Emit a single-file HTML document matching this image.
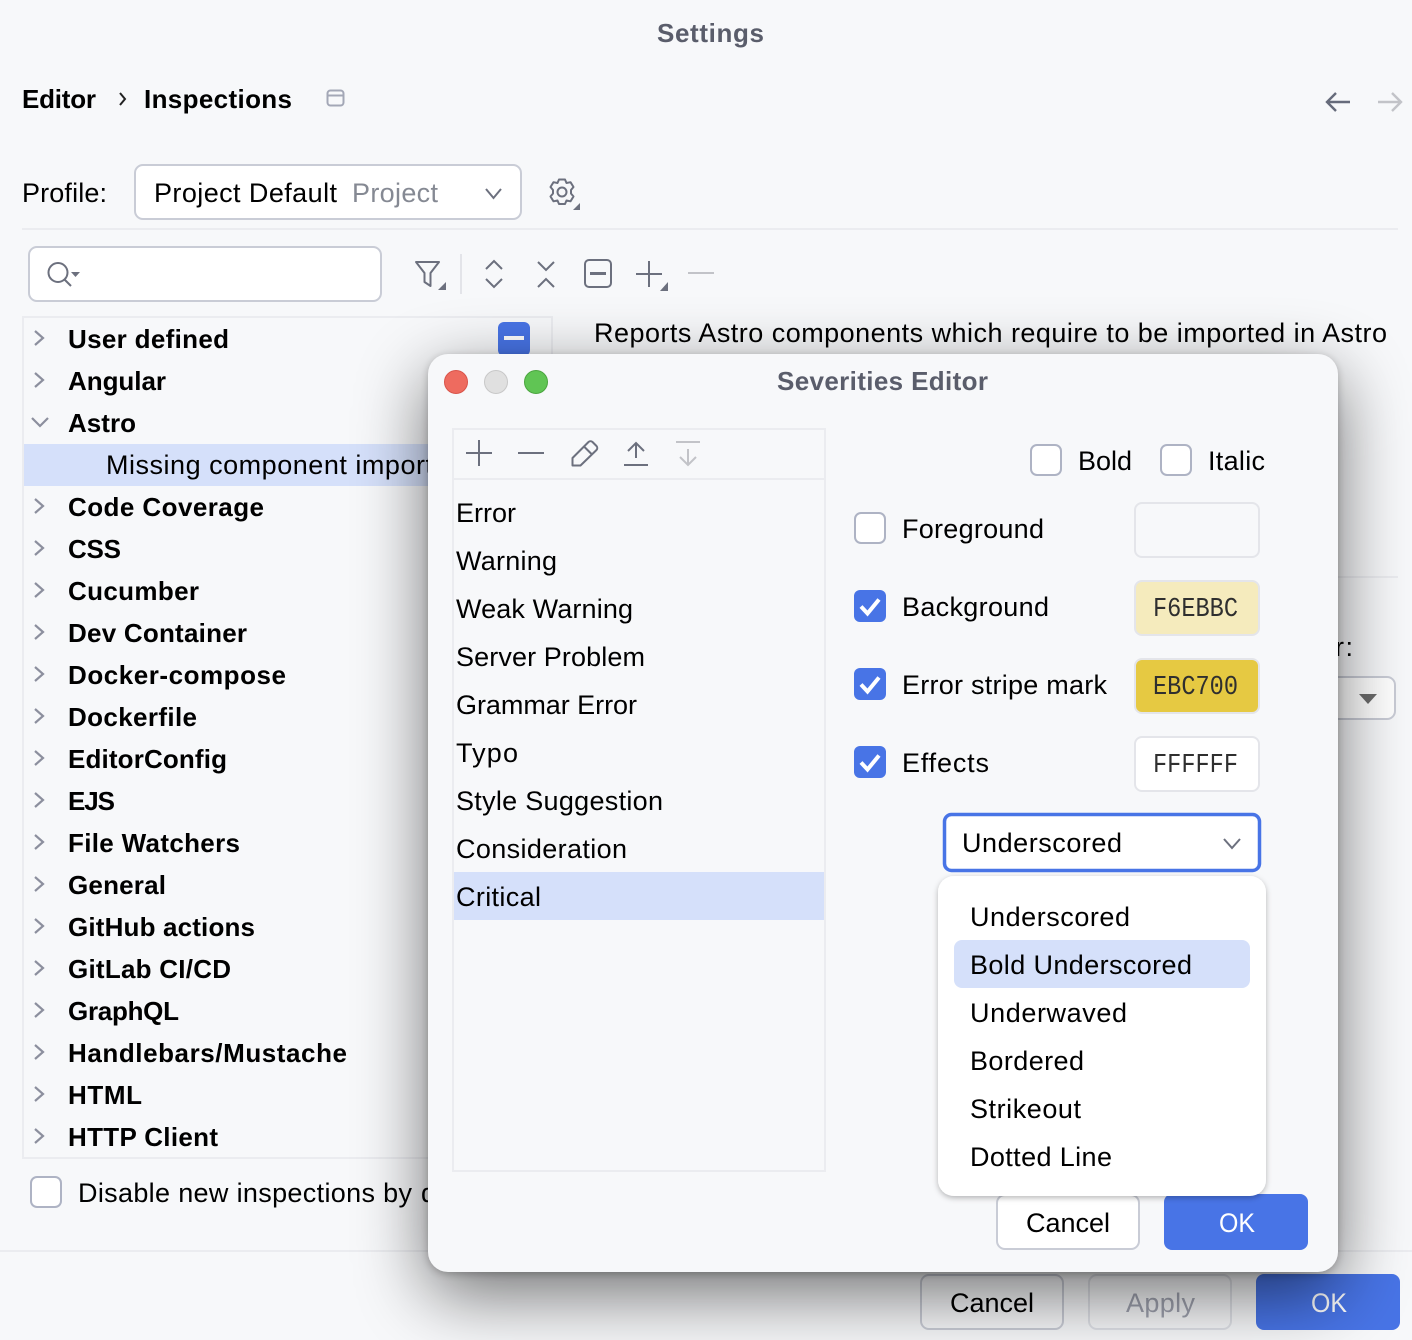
<!DOCTYPE html>
<html><head><meta charset="utf-8"><style>
html,body{margin:0;padding:0;background:#f7f8fa;width:1412px;height:1340px;overflow:hidden}
svg{display:block}
text{font-family:"Liberation Sans",sans-serif;font-size:27px;fill:#000}
text.b{font-weight:bold;font-size:26px}
text.m{font-family:"Liberation Mono",monospace;font-size:27px;fill:#2f2f2f}
.i{fill:none;stroke:#6c707e;stroke-width:2}
.d{fill:none;stroke:#c2c3c8;stroke-width:2}
.c{fill:none;stroke:#8c8f9e;stroke-width:2.2}
.cb{fill:#fff;stroke:#aeb3c4;stroke-width:2}
.ck{fill:#4874e6}
.t{fill:none;stroke:#fff;stroke-width:4}
</style></head><body>
<svg width="1412" height="1340" viewBox="0 0 1412 1340" xmlns="http://www.w3.org/2000/svg">
<defs>
<filter id="s" x="-30%" y="-30%" width="160%" height="160%"><feGaussianBlur stdDeviation="36"/></filter>
<filter id="s2" x="-30%" y="-30%" width="160%" height="160%"><feGaussianBlur stdDeviation="4"/></filter>
<filter id="p" x="-10%" y="-10%" width="120%" height="120%"><feDropShadow dx="0" dy="2" stdDeviation="3" flood-color="#000" flood-opacity=".28"/></filter>
</defs>
<rect width="1412" height="1340" fill="#f7f8fa"/>

<!-- background window -->
<text x="657" y="42" class="b" textLength="107" style="fill:#5a5d6b">Settings</text>
<text x="22" y="108" class="b" textLength="74">Editor</text>
<path d="M120 93l5 6-5 6" fill="none" stroke="#222" stroke-width="2"/>
<text x="144" y="108" class="b" textLength="148">Inspections</text>
<rect x="327.500" y="90.500" width="16" height="15" rx="3" fill="none" stroke="#a3a7b6" stroke-width="2"/><path d="M328 95.500h15" stroke="#a3a7b6" stroke-width="2"/>
<path d="M1350 102h-23M1336 93l-9 9 9 9" fill="none" stroke="#666b7b" stroke-width="2.400"/>
<path d="M1378 102h23M1392 93l9 9-9 9" fill="none" stroke="#c2c3c8" stroke-width="2.400"/>

<text x="22" y="202" textLength="85">Profile:</text>
<rect x="135" y="165" width="386" height="54" rx="8" fill="#fff" stroke="#c9ccd6" stroke-width="2"/>
<text x="154" y="202" textLength="183">Project Default</text>
<text x="352" y="202" textLength="86" style="fill:#858993">Project</text>
<path d="M486 189l7.500 9 7.500-9" class="i"/>
<!-- gear -->
<path d="M559 179.500h6l1.500 3.500 4-.8 3 4.800-2.500 3 .0 3.500 2.500 3-3 4.800-4-.8-1.500 3.500h-6l-1.500-3.500-4 .8-3-4.800 2.500-3v-3.500l-2.500-3 3-4.800 4 .8z" class="i" stroke-linejoin="round"/>
<circle cx="562" cy="192" r="4.500" class="i"/>
<path d="M580 203v7h-7z" fill="#6c707e"/>
<rect x="22" y="228" width="1376" height="2" fill="#ebecf0"/>

<rect x="29" y="247" width="352" height="54" rx="8" fill="#fff" stroke="#c9ccd6" stroke-width="2"/>
<circle cx="58" cy="272.500" r="9.500" class="i"/><path d="M64.500 279.500L71 286" class="i"/><path d="M71 272h9l-4.500 5z" fill="#6c707e"/>
<path d="M416 262h23l-8.500 11v13l-6-4v-9z" class="i" stroke-linejoin="round"/><path d="M446 282v8h-8z" fill="#6c707e"/>
<rect x="460" y="254" width="2" height="40" fill="#e3e4e9"/>
<path d="M486 269l8-8 8 8M486 279l8 8 8-8" class="i"/>
<path d="M538 262l8 8 8-8M538 287l8-8 8 8" class="i"/>
<rect x="585" y="260" width="26" height="27" rx="4" class="i"/><path d="M590 273.500h16" class="i" style="stroke-width:3"/>
<path d="M649 261v26M636 274h26" class="i"/><path d="M668 282v9h-8z" fill="#6c707e"/>
<path d="M688 273h26" class="d"/>

<!-- tree -->
<rect x="23" y="317" width="529" height="841" fill="none" stroke="#ebecf0" stroke-width="2"/>
<rect x="24" y="444" width="430" height="42" fill="#d5e0fa"/>
<rect x="498" y="322" width="32" height="34" rx="6" class="ck"/><rect x="504" y="336" width="20" height="4" fill="#fff"/>
<text class="b" x="68" y="348" textLength="161">User defined</text>
<text class="b" x="68" y="390" textLength="98">Angular</text>
<text class="b" x="68" y="432" textLength="68">Astro</text>
<text class="b" x="68" y="516" textLength="196">Code Coverage</text>
<text class="b" x="68" y="558" textLength="53">CSS</text>
<text class="b" x="68" y="600" textLength="131">Cucumber</text>
<text class="b" x="68" y="642" textLength="179">Dev Container</text>
<text class="b" x="68" y="684" textLength="218">Docker-compose</text>
<text class="b" x="68" y="726" textLength="129">Dockerfile</text>
<text class="b" x="68" y="768" textLength="159">EditorConfig</text>
<text class="b" x="68" y="810" textLength="47">EJS</text>
<text class="b" x="68" y="852" textLength="172">File Watchers</text>
<text class="b" x="68" y="894" textLength="98">General</text>
<text class="b" x="68" y="936" textLength="187">GitHub actions</text>
<text class="b" x="68" y="978" textLength="163">GitLab CI/CD</text>
<text class="b" x="68" y="1020" textLength="111">GraphQL</text>
<text class="b" x="68" y="1062" textLength="279">Handlebars/Mustache</text>
<text class="b" x="68" y="1104" textLength="74">HTML</text>
<text class="b" x="68" y="1146" textLength="150">HTTP Client</text>
<text x="106" y="474" textLength="341">Missing component imports</text>
<g class="c">
<path d="M35 331l8 7-8 7M35 373l8 7-8 7M32 418l8 8 8-8M35 499l8 7-8 7M35 541l8 7-8 7M35 583l8 7-8 7M35 625l8 7-8 7M35 667l8 7-8 7M35 709l8 7-8 7M35 751l8 7-8 7M35 793l8 7-8 7M35 835l8 7-8 7M35 877l8 7-8 7M35 919l8 7-8 7M35 961l8 7-8 7M35 1003l8 7-8 7M35 1045l8 7-8 7M35 1087l8 7-8 7M35 1129l8 7-8 7"/>
</g>
<rect x="31" y="1177" width="30" height="30" rx="6" class="cb"/>
<text x="78" y="1202" textLength="334">Disable new inspections by</text>
<text x="421" y="1202" textLength="90">default</text>
<rect x="0" y="1250" width="1412" height="2" fill="#ebecf0"/>

<text x="594" y="342" textLength="793">Reports Astro components which require to be imported in Astro</text>
<rect x="1300" y="576" width="98" height="2" fill="#ebecf0"/>
<text x="1335" y="656" textLength="18">r:</text>
<rect x="1200" y="677" width="195" height="42" rx="8" fill="#fff" stroke="#c9ccd6" stroke-width="2"/>
<path d="M1359 694h18l-9 10z" fill="#6c6c6c"/>

<rect x="921" y="1275" width="142" height="54" rx="8" fill="#f7f8fa" stroke="#c9ccd6" stroke-width="2"/>
<text x="950" y="1312" textLength="84">Cancel</text>
<rect x="1089" y="1275" width="142" height="54" rx="8" fill="#f7f8fa" stroke="#dfe1e7" stroke-width="2"/>
<text x="1126" y="1312" textLength="69" style="fill:#a0a3b0">Apply</text>
<rect x="1256" y="1274" width="144" height="56" rx="8" fill="#4874e6"/>
<text x="1311" y="1312" textLength="36" lengthAdjust="spacingAndGlyphs" style="fill:#fff">OK</text>

<!-- shadow -->
<rect x="428" y="376" width="910" height="918" rx="20" fill="#000" opacity=".55" filter="url(#s)"/>
<rect x="428" y="356" width="910" height="918" rx="20" fill="#000" opacity=".22" filter="url(#s2)"/>

<!-- dialog -->
<rect x="428" y="354" width="910" height="918" rx="20" fill="#f7f8fa"/>
<circle cx="456" cy="382" r="11.500" fill="#ee6b5f" stroke="#d9544a"/>
<circle cx="496" cy="382" r="11.500" fill="#e0e0e0" stroke="#c8c8c8"/>
<circle cx="536" cy="382" r="11.500" fill="#60c554" stroke="#4ba53f"/>
<text x="777" y="390" class="b" textLength="211" style="fill:#5a5d6b">Severities Editor</text>

<rect x="453" y="429" width="372" height="742" fill="none" stroke="#ebecf0" stroke-width="2"/>
<rect x="453" y="478" width="372" height="2" fill="#ebecf0"/>
<path d="M479 440v26M466 453h26M518 453h26" class="i"/>
<path d="M572.500 465.500v-7.500l16-16a3 3 0 0 1 4 0l4 4a3 3 0 0 1 0 4l-16 15.500zM584 446.500l8 8" class="i" stroke-linejoin="round"/>
<path d="M624 465h24M636 458v-15M628 451l8-8 8 8" class="i"/>
<path d="M676 442h24M688 449v15M680 457l8 8 8-8" class="d"/>

<rect x="454" y="872" width="370" height="48" fill="#d5e0fa"/>
<text x="456" y="522" textLength="60">Error</text>
<text x="456" y="570" textLength="101">Warning</text>
<text x="456" y="618" textLength="177">Weak Warning</text>
<text x="456" y="666" textLength="189">Server Problem</text>
<text x="456" y="714" textLength="181">Grammar Error</text>
<text x="456" y="762" textLength="62">Typo</text>
<text x="456" y="810" textLength="207">Style Suggestion</text>
<text x="456" y="858" textLength="171">Consideration</text>
<text x="456" y="906" textLength="85">Critical</text>

<rect x="1031" y="445" width="30" height="30" rx="6" class="cb"/>
<text x="1078" y="470" textLength="54">Bold</text>
<rect x="1161" y="445" width="30" height="30" rx="6" class="cb"/>
<text x="1208" y="470" textLength="57">Italic</text>

<rect x="855" y="513" width="30" height="30" rx="6" class="cb"/>
<text x="902" y="538" textLength="142">Foreground</text>
<rect x="1135" y="503" width="124" height="54" rx="7" fill="#f7f8fa" stroke="#e4e5ea" stroke-width="2"/>

<rect x="854" y="590" width="32" height="32" rx="6" class="ck"/><path d="M861 606.500l6.500 7 11.500-14" class="t"/>
<text x="902" y="616" textLength="147">Background</text>
<rect x="1135" y="581" width="124" height="54" rx="7" fill="#f5ebbd" stroke="#e4e5ea" stroke-width="2"/>
<text x="1153" y="616" class="m" textLength="85" lengthAdjust="spacingAndGlyphs">F6EBBC</text>

<rect x="854" y="668" width="32" height="32" rx="6" class="ck"/><path d="M861 684.500l6.500 7 11.500-14" class="t"/>
<text x="902" y="694" textLength="205">Error stripe mark</text>
<rect x="1135" y="659" width="124" height="54" rx="7" fill="#e6c942" stroke="#e4e5ea" stroke-width="2"/>
<text x="1153" y="694" class="m" textLength="85" lengthAdjust="spacingAndGlyphs">EBC700</text>

<rect x="854" y="746" width="32" height="32" rx="6" class="ck"/><path d="M861 762.500l6.500 7 11.500-14" class="t"/>
<text x="902" y="772" textLength="87">Effects</text>
<rect x="1135" y="737" width="124" height="54" rx="7" fill="#fff" stroke="#e4e5ea" stroke-width="2"/>
<text x="1153" y="772" class="m" textLength="85" lengthAdjust="spacingAndGlyphs">FFFFFF</text>

<rect x="944.500" y="814.500" width="315" height="56" rx="7" fill="#fff" stroke="#4874e6" stroke-width="3.500"/>
<text x="962" y="852" textLength="160">Underscored</text>
<path d="M1224 839l8 9 8-9" class="i"/>

<rect x="997" y="1195" width="142" height="54" rx="8" fill="#fff" stroke="#c9ccd6" stroke-width="2"/>
<text x="1026" y="1232" textLength="84">Cancel</text>
<rect x="1164" y="1194" width="144" height="56" rx="8" fill="#4874e6"/>
<text x="1219" y="1232" textLength="36" lengthAdjust="spacingAndGlyphs" style="fill:#fff">OK</text>

<!-- popup -->
<rect x="938" y="876" width="328" height="320" rx="16" fill="#fff" filter="url(#p)"/>
<rect x="954" y="940" width="296" height="48" rx="8" fill="#d5e0fa"/>
<text x="970" y="926" textLength="160">Underscored</text>
<text x="970" y="974" textLength="222">Bold Underscored</text>
<text x="970" y="1022" textLength="157">Underwaved</text>
<text x="970" y="1070" textLength="114">Bordered</text>
<text x="970" y="1118" textLength="111">Strikeout</text>
<text x="970" y="1166" textLength="142">Dotted Line</text>
</svg>
</body></html>
